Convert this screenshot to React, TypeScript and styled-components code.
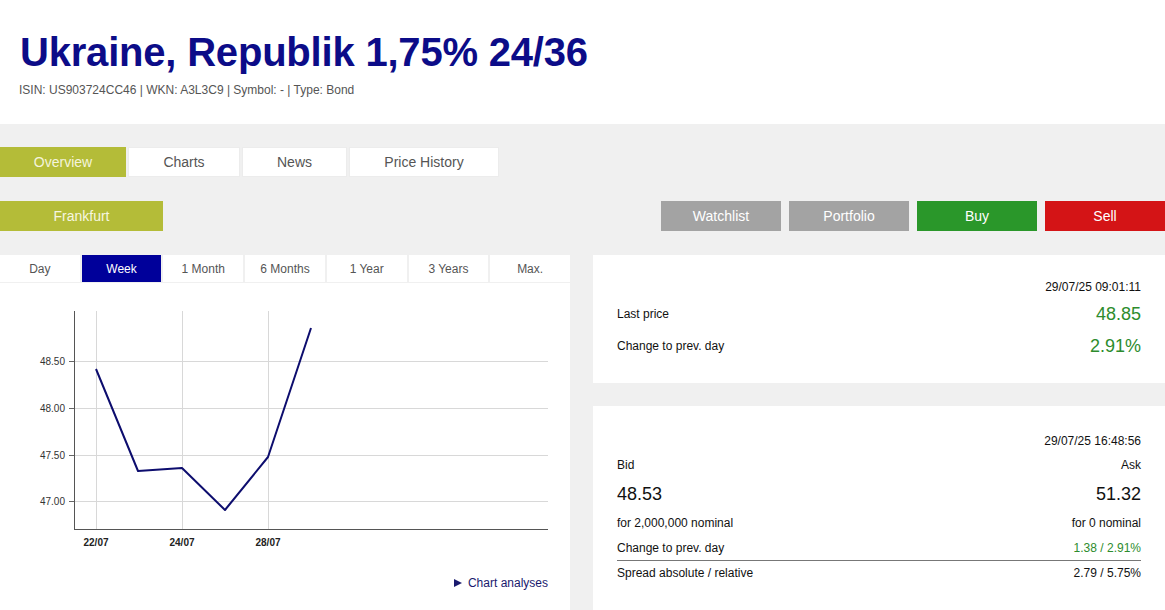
import React from "react";
import styled, { createGlobalStyle } from "styled-components";

const Global = createGlobalStyle`
  html, body { margin: 0; padding: 0; }
  body {
    font-family: "Liberation Sans", Arial, sans-serif;
    background: #f0f0f0;
    width: 1165px;
    overflow: hidden;
  }
`;

const Page = styled.div`
  width: 1165px;
  height: 610px;
  overflow: hidden;
  background: #f0f0f0;
`;

const Header = styled.header`
  background: #fff;
  height: 124px;
  box-sizing: border-box;
  padding: 28px 0 0 20px;
`;

const Title = styled.h1`
  margin: 0;
  font-size: 40px;
  line-height: 48px;
  font-weight: bold;
  color: #0c0c88;
  letter-spacing: -0.2px;
`;

const Sub = styled.div`
  margin-top: 7px;
  margin-left: -1px;
  font-size: 12px;
  line-height: 14px;
  color: #555;
`;

const TabBar = styled.nav`
  display: flex;
  gap: 2px;
  margin-top: 23px;
  height: 30px;
`;

const Tab = styled.div<{ $active?: boolean; $w: number }>`
  width: ${(p) => p.$w}px;
  display: flex;
  align-items: center;
  justify-content: center;
  font-size: 14px;
  color: ${(p) => (p.$active ? "#f4f4dc" : "#555")};
  background: ${(p) => (p.$active ? "#b4bc38" : "#fff")};
  box-sizing: border-box;
  border: 1px solid ${(p) => (p.$active ? "#b4bc38" : "#ececec")};
`;

const ActionRow = styled.div`
  display: flex;
  align-items: center;
  margin-top: 24px;
  height: 30px;
`;

const Market = styled.div`
  width: 163px;
  height: 30px;
  display: flex;
  align-items: center;
  justify-content: center;
  background: #b4bc38;
  color: #f6f6e0;
  font-size: 14px;
`;

const Buttons = styled.div`
  margin-left: auto;
  display: flex;
  gap: 8px;
`;

const ActionButton = styled.div<{ $bg: string }>`
  width: 120px;
  height: 30px;
  display: flex;
  align-items: center;
  justify-content: center;
  background: ${(p) => p.$bg};
  color: #fff;
  font-size: 14px;
`;

const Columns = styled.div`
  display: grid;
  grid-template-columns: 570px 572px;
  column-gap: 23px;
  margin-top: 24px;
`;

const LeftCol = styled.div`
  display: flex;
  flex-direction: column;
  gap: 1px;
`;

const Periods = styled.div`
  display: grid;
  grid-template-columns: repeat(7, 1fr);
  gap: 2px;
  height: 27px;
`;

const Period = styled.div<{ $active?: boolean }>`
  display: flex;
  align-items: center;
  justify-content: center;
  font-size: 12px;
  color: ${(p) => (p.$active ? "#fff" : "#555")};
  background: ${(p) => (p.$active ? "#00009a" : "#fff")};
`;

const ChartPanel = styled.div`
  background: #fff;
  height: 340px;
`;

const ChartLink = styled.div`
  display: flex;
  justify-content: flex-end;
  align-items: center;
  gap: 5px;
  padding-right: 22px;
  margin-top: 22px;
  font-size: 12px;
  line-height: 16px;
  color: #1a1a6e;
`;

const RightCol = styled.div`
  display: flex;
  flex-direction: column;
  gap: 23px;
`;

const Panel = styled.section<{ $h: number; $pt: number }>`
  background: #fff;
  height: ${(p) => p.$h}px;
  box-sizing: border-box;
  padding: ${(p) => p.$pt}px 24px 0 24px;
  font-size: 12px;
  color: #111;
`;

const Row = styled.div<{ $h: number; $line?: boolean }>`
  display: flex;
  justify-content: space-between;
  align-items: center;
  height: ${(p) => p.$h}px;
  ${(p) => (p.$line ? "border-top: 1px solid #777;" : "")}
`;

const Stamp = styled.div<{ $h: number }>`
  height: ${(p) => p.$h}px;
  display: flex;
  align-items: center;
  justify-content: flex-end;
`;

const Value = styled.span<{ $green?: boolean; $big?: boolean }>`
  font-size: ${(p) => (p.$big ? "18px" : "12px")};
  color: ${(p) => (p.$green ? "#2d8c2d" : "#111")};
`;

const xs = [96, 138, 182, 225, 268, 311];
const ys = [86, 188, 185, 227, 174, 45];
const grid = [
  { y: 78, l: "48.50" },
  { y: 125, l: "48.00" },
  { y: 172, l: "47.50" },
  { y: 218, l: "47.00" },
];
const vlines = [
  { x: 96, l: "22/07" },
  { x: 182, l: "24/07" },
  { x: 268, l: "28/07" },
];

function Chart() {
  const pts = xs.map((x, i) => `${x},${ys[i]}`).join(" ");
  return (
    <svg width={570} height={270} style={{ display: "block" }}>
      {grid.map((g) => (
        <g key={g.l}>
          <line x1={74} x2={548} y1={g.y + 0.5} y2={g.y + 0.5} stroke="#d8d8d8" />
          <line x1={69} x2={74} y1={g.y + 0.5} y2={g.y + 0.5} stroke="#666" />
          <text x={65} y={g.y + 4} fontSize={10} textAnchor="end" fill="#333" fontFamily="Liberation Sans, Arial, sans-serif">
            {g.l}
          </text>
        </g>
      ))}
      {vlines.map((v) => (
        <g key={v.l}>
          <line x1={v.x + 0.5} x2={v.x + 0.5} y1={28} y2={246} stroke="#d8d8d8" />
          <text x={v.x} y={263} fontSize={10} fontWeight="bold" textAnchor="middle" fill="#222" fontFamily="Liberation Sans, Arial, sans-serif">
            {v.l}
          </text>
        </g>
      ))}
      <line x1={74.5} x2={74.5} y1={28} y2={246} stroke="#555" />
      <line x1={74} x2={548} y1={246.5} y2={246.5} stroke="#555" />
      <polyline points={pts} fill="none" stroke="#0d0d6e" strokeWidth={2} strokeLinejoin="round" />
    </svg>
  );
}

export default function App() {
  return (
    <Page>
      <Global />
      <Header>
        <Title>Ukraine, Republik 1,75% 24/36</Title>
        <Sub>ISIN: US903724CC46 | WKN: A3L3C9 | Symbol: - | Type: Bond</Sub>
      </Header>
      <TabBar>
        <Tab $active $w={126}>Overview</Tab>
        <Tab $w={112}>Charts</Tab>
        <Tab $w={105}>News</Tab>
        <Tab $w={150}>Price History</Tab>
      </TabBar>
      <ActionRow>
        <Market>Frankfurt</Market>
        <Buttons>
          <ActionButton $bg="#a3a3a3">Watchlist</ActionButton>
          <ActionButton $bg="#a3a3a3">Portfolio</ActionButton>
          <ActionButton $bg="#2a972a">Buy</ActionButton>
          <ActionButton $bg="#d41416">Sell</ActionButton>
        </Buttons>
      </ActionRow>
      <Columns>
        <LeftCol>
          <Periods>
            <Period>Day</Period>
            <Period $active>Week</Period>
            <Period>1 Month</Period>
            <Period>6 Months</Period>
            <Period>1 Year</Period>
            <Period>3 Years</Period>
            <Period>Max.</Period>
          </Periods>
          <ChartPanel>
            <Chart />
            <ChartLink>
              <svg width={10} height={10} viewBox="0 0 10 10">
                <path d="M1 1 L9 5 L1 9 Z" fill="#1a1a6e" />
              </svg>
              Chart analyses
            </ChartLink>
          </ChartPanel>
        </LeftCol>
        <RightCol>
          <Panel $h={128} $pt={22}>
            <Stamp $h={20}>29/07/25 09:01:11</Stamp>
            <Row $h={34}>
              <span>Last price</span>
              <Value $green $big>48.85</Value>
            </Row>
            <Row $h={30}>
              <span>Change to prev. day</span>
              <Value $green $big>2.91%</Value>
            </Row>
          </Panel>
          <Panel $h={300} $pt={23}>
            <Stamp $h={24}>29/07/25 16:48:56</Stamp>
            <Row $h={24}>
              <span>Bid</span>
              <span>Ask</span>
            </Row>
            <Row $h={34}>
              <Value $big>48.53</Value>
              <Value $big>51.32</Value>
            </Row>
            <Row $h={24}>
              <span>for 2,000,000 nominal</span>
              <span>for 0 nominal</span>
            </Row>
            <Row $h={25}>
              <span>Change to prev. day</span>
              <Value $green>1.38 / 2.91%</Value>
            </Row>
            <Row $h={24} $line>
              <span>Spread absolute / relative</span>
              <span>2.79 / 5.75%</span>
            </Row>
          </Panel>
        </RightCol>
      </Columns>
    </Page>
  );
}
